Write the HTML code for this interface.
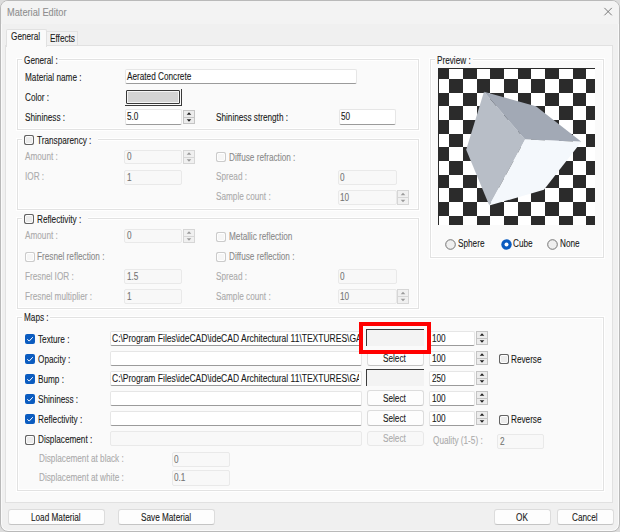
<!DOCTYPE html>
<html><head><meta charset="utf-8"><style>
html,body{margin:0;padding:0;width:620px;height:532px;overflow:hidden;background:#dcdcdc;}
body{position:relative;font-family:"Liberation Sans",sans-serif;}
.r{position:absolute;box-sizing:border-box;}
.t{position:absolute;white-space:nowrap;line-height:11px;transform-origin:0 0;-webkit-text-stroke:0.1px currentColor;}
.clip{position:absolute;overflow:hidden;}
</style></head><body>
<div class="r" style="left:0px;top:0px;width:620px;height:532px;background:#f0f0f0;border:1px solid #b9b9b9;border-radius:8px;box-shadow:inset 0 0 0 1px #fafafa;"></div>
<div class="r" style="left:1px;top:1px;width:618px;height:23px;background:#f3f3f3;border-radius:7px 7px 0 0;"></div>
<div class="t" style="left:7.3px;top:6.87px;color:#8f8f8f;font-size:10.5px;transform:scaleX(0.88);">Material Editor</div>
<svg class="r" style="left:603px;top:6px" width="10" height="11"><path d="M1.4,1.9 L8.8,9.3 M8.8,1.9 L1.4,9.3" stroke="#6a6a6a" stroke-width="0.9"/></svg>
<div class="r" style="left:46px;top:31px;width:32px;height:15px;background:#f2f2f2;border:1px solid #e2e2e2;border-bottom:none;"></div>
<div class="t" style="left:49.8px;top:32.90px;color:#1a1a1a;font-size:10.0px;transform:scaleX(0.82);">Effects</div>
<div class="r" style="left:5px;top:45px;width:608px;height:458px;background:#fafafa;border:1px solid #e1e1e1;"></div>
<div class="r" style="left:6px;top:29px;width:41px;height:18px;background:#fafafa;border:1px solid #e1e1e1;border-bottom:none;border-radius:2px 2px 0 0;"></div>
<div class="t" style="left:11.1px;top:31.30px;color:#1a1a1a;font-size:10.0px;transform:scaleX(0.82);">General</div>
<div class="r" style="left:17px;top:59px;width:402px;height:71px;border:1px solid #e2e2e2;box-shadow:inset 0 0 0 1px #fff, 0 0 0 1px #fff;"></div>
<div class="r" style="left:17px;top:139px;width:402px;height:71px;border:1px solid #e2e2e2;box-shadow:inset 0 0 0 1px #fff, 0 0 0 1px #fff;"></div>
<div class="r" style="left:17px;top:218px;width:402px;height:91px;border:1px solid #e2e2e2;box-shadow:inset 0 0 0 1px #fff, 0 0 0 1px #fff;"></div>
<div class="r" style="left:17px;top:317px;width:587px;height:174px;border:1px solid #e2e2e2;box-shadow:inset 0 0 0 1px #fff, 0 0 0 1px #fff;"></div>
<div class="r" style="left:430px;top:59px;width:174px;height:199px;border:1px solid #e2e2e2;box-shadow:inset 0 0 0 1px #fff, 0 0 0 1px #fff;"></div>
<div class="r" style="left:22px;top:55px;width:37px;height:11px;background:#fafafa;"></div>
<div class="r" style="left:22px;top:133px;width:76px;height:14px;background:#fafafa;"></div>
<div class="r" style="left:22px;top:212px;width:66px;height:14px;background:#fafafa;"></div>
<div class="r" style="left:22px;top:312px;width:28px;height:11px;background:#fafafa;"></div>
<div class="r" style="left:435px;top:55px;width:38px;height:11px;background:#fafafa;"></div>
<div class="t" style="left:24px;top:55.00px;color:#1a1a1a;font-size:10.0px;transform:scaleX(0.82);">General :</div>
<div class="t" style="left:437.3px;top:55.00px;color:#1a1a1a;font-size:10.0px;transform:scaleX(0.82);">Preview :</div>
<div class="t" style="left:24px;top:312.40px;color:#1a1a1a;font-size:10.0px;transform:scaleX(0.82);">Maps :</div>
<div class="t" style="left:25px;top:72.00px;color:#1a1a1a;font-size:10.0px;transform:scaleX(0.82);">Material name :</div>
<div class="r" style="left:125px;top:69px;width:232px;height:15px;background:#ffffff;border:1px solid #e6e6e6;border-bottom:1px solid #9b9b9b;border-radius:2px;"></div>
<div class="t" style="left:126.8px;top:70.50px;color:#1a1a1a;font-size:10.0px;transform:scaleX(0.82);">Aerated Concrete</div>
<div class="t" style="left:25px;top:92.10px;color:#1a1a1a;font-size:10.0px;transform:scaleX(0.82);">Color :</div>
<div class="r" style="left:181px;top:89px;width:1px;height:17px;background:#3a3a3a;"></div>
<div class="r" style="left:125px;top:105px;width:57px;height:1px;background:#3a3a3a;"></div>
<div class="r" style="left:126px;top:90px;width:54px;height:14px;background:#d3d3d3;border:1px solid #383838;border-radius:1px;box-shadow:inset 0 0 0 1px #f4f4f4;"></div>
<div class="t" style="left:25px;top:112.00px;color:#1a1a1a;font-size:10.0px;transform:scaleX(0.82);">Shininess :</div>
<div class="r" style="left:125px;top:109px;width:57px;height:16px;background:#ffffff;border:1px solid #e6e6e6;border-bottom:1px solid #9b9b9b;border-radius:2px;"></div>
<div class="t" style="left:127.2px;top:111.00px;color:#1a1a1a;font-size:10.0px;transform:scaleX(0.82);">5.0</div>
<div class="r" style="left:183px;top:110px;width:12px;height:14px;background:#ececec;border:1px solid #c4c4c4;"></div>
<div class="r" style="left:183px;top:116.5px;width:12px;height:1.0px;background:#c4c4c4;"></div>
<svg class="r" style="left:183px;top:110px" width="12" height="14"><path d="M3.7,4.8 L8.3,4.8 L6.0,2.2 Z M3.7,9.2 L8.3,9.2 L6.0,11.8 Z" fill="#222"/></svg>
<div class="t" style="left:215.6px;top:112.00px;color:#1a1a1a;font-size:10.0px;transform:scaleX(0.82);">Shininess strength :</div>
<div class="r" style="left:339px;top:109px;width:57px;height:16px;background:#ffffff;border:1px solid #e6e6e6;border-bottom:1px solid #9b9b9b;border-radius:2px;"></div>
<div class="t" style="left:341px;top:111.00px;color:#1a1a1a;font-size:10.0px;transform:scaleX(0.82);">50</div>
<svg class="r" style="left:24px;top:135px" width="10" height="10"><rect x="0.5" y="0.5" width="9" height="9" rx="2" fill="#ffffff" stroke="#636363" stroke-width="1.1"/><rect x="2" y="2" width="6" height="6" fill="#ececec"/></svg>
<div class="t" style="left:37.1px;top:134.60px;color:#1a1a1a;font-size:10.0px;transform:scaleX(0.82);">Transparency :</div>
<div class="t" style="left:25px;top:151.10px;color:#ababab;font-size:10.0px;transform:scaleX(0.82);">Amount :</div>
<div class="r" style="left:124px;top:150px;width:58px;height:14px;background:#f8f8f8;border:1px solid #e9e9e9;border-radius:2px;"></div>
<div class="t" style="left:127px;top:151.00px;color:#747474;font-size:10.0px;transform:scaleX(0.82);">0</div>
<div class="r" style="left:183px;top:150px;width:12px;height:14px;background:#f0f0f0;border:1px solid #d6d6d6;"></div>
<div class="r" style="left:183px;top:156.5px;width:12px;height:1.0px;background:#d6d6d6;"></div>
<svg class="r" style="left:183px;top:150px" width="12" height="14"><path d="M3.7,4.8 L8.3,4.8 L6.0,2.2 Z M3.7,9.2 L8.3,9.2 L6.0,11.8 Z" fill="#9a9a9a"/></svg>
<div class="t" style="left:25px;top:171.10px;color:#ababab;font-size:10.0px;transform:scaleX(0.82);">IOR :</div>
<div class="r" style="left:124px;top:170px;width:58px;height:15px;background:#f8f8f8;border:1px solid #e9e9e9;border-radius:2px;"></div>
<div class="t" style="left:127px;top:171.50px;color:#747474;font-size:10.0px;transform:scaleX(0.82);">1</div>
<svg class="r" style="left:216px;top:152px" width="10" height="10"><rect x="0.5" y="0.5" width="9" height="9" rx="2" fill="#ffffff" stroke="#cbcbcb" stroke-width="1.1"/><rect x="2" y="2" width="6" height="6" fill="#f6f6f6"/></svg>
<div class="t" style="left:229px;top:151.70px;color:#8a8a8a;font-size:10.0px;transform:scaleX(0.82);">Diffuse refraction :</div>
<div class="t" style="left:216px;top:171.10px;color:#ababab;font-size:10.0px;transform:scaleX(0.82);">Spread :</div>
<div class="r" style="left:338px;top:170px;width:59px;height:15px;background:#f8f8f8;border:1px solid #e9e9e9;border-radius:2px;"></div>
<div class="t" style="left:340.4px;top:171.50px;color:#747474;font-size:10.0px;transform:scaleX(0.82);">0</div>
<div class="t" style="left:216px;top:191.20px;color:#ababab;font-size:10.0px;transform:scaleX(0.82);">Sample count :</div>
<div class="r" style="left:338px;top:190px;width:59px;height:15px;background:#f8f8f8;border:1px solid #e9e9e9;border-radius:2px;"></div>
<div class="t" style="left:340.4px;top:191.50px;color:#747474;font-size:10.0px;transform:scaleX(0.82);">10</div>
<div class="r" style="left:397px;top:190px;width:12px;height:15px;background:#f0f0f0;border:1px solid #d6d6d6;"></div>
<div class="r" style="left:397px;top:197.0px;width:12px;height:1.0px;background:#d6d6d6;"></div>
<svg class="r" style="left:397px;top:190px" width="12" height="15"><path d="M3.7,5.3 L8.3,5.3 L6.0,2.7 Z M3.7,9.7 L8.3,9.7 L6.0,12.3 Z" fill="#9a9a9a"/></svg>
<svg class="r" style="left:24px;top:214px" width="10" height="10"><rect x="0.5" y="0.5" width="9" height="9" rx="2" fill="#ffffff" stroke="#636363" stroke-width="1.1"/><rect x="2" y="2" width="6" height="6" fill="#ececec"/></svg>
<div class="t" style="left:37.1px;top:213.60px;color:#1a1a1a;font-size:10.0px;transform:scaleX(0.82);">Reflectivity :</div>
<div class="t" style="left:25px;top:230.10px;color:#ababab;font-size:10.0px;transform:scaleX(0.82);">Amount :</div>
<div class="r" style="left:124px;top:229px;width:58px;height:14px;background:#f8f8f8;border:1px solid #e9e9e9;border-radius:2px;"></div>
<div class="t" style="left:127px;top:230.00px;color:#747474;font-size:10.0px;transform:scaleX(0.82);">0</div>
<div class="r" style="left:183px;top:229px;width:12px;height:14px;background:#f0f0f0;border:1px solid #d6d6d6;"></div>
<div class="r" style="left:183px;top:235.5px;width:12px;height:1.0px;background:#d6d6d6;"></div>
<svg class="r" style="left:183px;top:229px" width="12" height="14"><path d="M3.7,4.8 L8.3,4.8 L6.0,2.2 Z M3.7,9.2 L8.3,9.2 L6.0,11.8 Z" fill="#9a9a9a"/></svg>
<svg class="r" style="left:25px;top:252px" width="10" height="10"><rect x="0.5" y="0.5" width="9" height="9" rx="2" fill="#ffffff" stroke="#cbcbcb" stroke-width="1.1"/><rect x="2" y="2" width="6" height="6" fill="#f6f6f6"/></svg>
<div class="t" style="left:37.3px;top:250.90px;color:#8a8a8a;font-size:10.0px;transform:scaleX(0.82);">Fresnel reflection :</div>
<div class="t" style="left:25px;top:270.60px;color:#ababab;font-size:10.0px;transform:scaleX(0.82);">Fresnel IOR :</div>
<div class="r" style="left:124px;top:269px;width:58px;height:15px;background:#f8f8f8;border:1px solid #e9e9e9;border-radius:2px;"></div>
<div class="t" style="left:127px;top:270.50px;color:#747474;font-size:10.0px;transform:scaleX(0.82);">1.5</div>
<div class="t" style="left:25px;top:290.60px;color:#ababab;font-size:10.0px;transform:scaleX(0.82);">Fresnel multiplier :</div>
<div class="r" style="left:124px;top:289px;width:58px;height:15px;background:#f8f8f8;border:1px solid #e9e9e9;border-radius:2px;"></div>
<div class="t" style="left:127px;top:290.50px;color:#747474;font-size:10.0px;transform:scaleX(0.82);">1</div>
<svg class="r" style="left:216px;top:231.5px" width="10" height="10"><rect x="0.5" y="0.5" width="9" height="9" rx="2" fill="#ffffff" stroke="#cbcbcb" stroke-width="1.1"/><rect x="2" y="2" width="6" height="6" fill="#f6f6f6"/></svg>
<div class="t" style="left:229px;top:230.90px;color:#8a8a8a;font-size:10.0px;transform:scaleX(0.82);">Metallic reflection</div>
<svg class="r" style="left:216px;top:252px" width="10" height="10"><rect x="0.5" y="0.5" width="9" height="9" rx="2" fill="#ffffff" stroke="#cbcbcb" stroke-width="1.1"/><rect x="2" y="2" width="6" height="6" fill="#f6f6f6"/></svg>
<div class="t" style="left:229px;top:251.10px;color:#8a8a8a;font-size:10.0px;transform:scaleX(0.82);">Diffuse reflection :</div>
<div class="t" style="left:216px;top:270.60px;color:#ababab;font-size:10.0px;transform:scaleX(0.82);">Spread :</div>
<div class="r" style="left:338px;top:269px;width:59px;height:15px;background:#f8f8f8;border:1px solid #e9e9e9;border-radius:2px;"></div>
<div class="t" style="left:340.4px;top:270.50px;color:#747474;font-size:10.0px;transform:scaleX(0.82);">0</div>
<div class="t" style="left:216px;top:290.60px;color:#ababab;font-size:10.0px;transform:scaleX(0.82);">Sample count :</div>
<div class="r" style="left:338px;top:289px;width:59px;height:15px;background:#f8f8f8;border:1px solid #e9e9e9;border-radius:2px;"></div>
<div class="t" style="left:340.4px;top:290.50px;color:#747474;font-size:10.0px;transform:scaleX(0.82);">10</div>
<div class="r" style="left:397px;top:289px;width:12px;height:15px;background:#f0f0f0;border:1px solid #d6d6d6;"></div>
<div class="r" style="left:397px;top:296.0px;width:12px;height:1.0px;background:#d6d6d6;"></div>
<svg class="r" style="left:397px;top:289px" width="12" height="15"><path d="M3.7,5.3 L8.3,5.3 L6.0,2.7 Z M3.7,9.7 L8.3,9.7 L6.0,12.3 Z" fill="#9a9a9a"/></svg>
<svg class="r" style="left:25px;top:334px" width="10" height="10"><rect x="0" y="0" width="10" height="10" rx="2" fill="#0b5cc0"/><path d="M2.3,5.2 L4.2,7.1 L7.8,3.2" stroke="#fff" stroke-width="1" fill="none"/></svg>
<div class="t" style="left:37.7px;top:333.60px;color:#1a1a1a;font-size:10.0px;transform:scaleX(0.82);">Texture :</div>
<div class="r" style="left:110px;top:331px;width:252px;height:15px;background:#ffffff;border:1px solid #e6e6e6;border-bottom:1px solid #9b9b9b;border-radius:2px;"></div>
<div class="clip" style="left:111px;top:331px;width:248px;height:15px;"><div class="t" style="left:0.7px;top:1.70px;color:#1a1a1a;font-size:10.0px;transform:scaleX(0.85);">C:\Program Files\ideCAD\ideCAD Architectural 11\TEXTURES\GAS-BETON.jpg</div></div>
<div class="r" style="left:366px;top:329px;width:58px;height:17px;background:#f3f3f3;border-top:1px solid #3c3c3c;border-left:1px solid #3c3c3c;"></div>
<div class="r" style="left:429px;top:331px;width:46px;height:15px;background:#ffffff;border:1px solid #e6e6e6;border-bottom:1px solid #9b9b9b;border-radius:2px;"></div>
<div class="t" style="left:432.1px;top:332.50px;color:#1a1a1a;font-size:10.0px;transform:scaleX(0.82);">100</div>
<div class="r" style="left:476px;top:331px;width:12px;height:14px;background:#ececec;border:1px solid #c4c4c4;"></div>
<div class="r" style="left:476px;top:337.5px;width:12px;height:1.0px;background:#c4c4c4;"></div>
<svg class="r" style="left:476px;top:331px" width="12" height="14"><path d="M3.7,4.8 L8.3,4.8 L6.0,2.2 Z M3.7,9.2 L8.3,9.2 L6.0,11.8 Z" fill="#222"/></svg>
<svg class="r" style="left:25px;top:354px" width="10" height="10"><rect x="0" y="0" width="10" height="10" rx="2" fill="#0b5cc0"/><path d="M2.3,5.2 L4.2,7.1 L7.8,3.2" stroke="#fff" stroke-width="1" fill="none"/></svg>
<div class="t" style="left:37.7px;top:353.60px;color:#1a1a1a;font-size:10.0px;transform:scaleX(0.82);">Opacity :</div>
<div class="r" style="left:110px;top:351px;width:252px;height:15px;background:#ffffff;border:1px solid #e6e6e6;border-bottom:1px solid #9b9b9b;border-radius:2px;"></div>
<div class="r" style="left:367px;top:350px;width:57px;height:16px;background:#fdfdfd;border:1px solid #dcdcdc;border-bottom-color:#c4c4c4;border-radius:3px;"></div>
<div class="t" style="left:382.9px;top:352.80px;color:#1a1a1a;font-size:10.0px;transform:scaleX(0.82);">Select</div>
<div class="r" style="left:429px;top:351px;width:46px;height:15px;background:#ffffff;border:1px solid #e6e6e6;border-bottom:1px solid #9b9b9b;border-radius:2px;"></div>
<div class="t" style="left:432.1px;top:352.50px;color:#1a1a1a;font-size:10.0px;transform:scaleX(0.82);">100</div>
<div class="r" style="left:476px;top:351px;width:12px;height:14px;background:#ececec;border:1px solid #c4c4c4;"></div>
<div class="r" style="left:476px;top:357.5px;width:12px;height:1.0px;background:#c4c4c4;"></div>
<svg class="r" style="left:476px;top:351px" width="12" height="14"><path d="M3.7,4.8 L8.3,4.8 L6.0,2.2 Z M3.7,9.2 L8.3,9.2 L6.0,11.8 Z" fill="#222"/></svg>
<svg class="r" style="left:25px;top:374px" width="10" height="10"><rect x="0" y="0" width="10" height="10" rx="2" fill="#0b5cc0"/><path d="M2.3,5.2 L4.2,7.1 L7.8,3.2" stroke="#fff" stroke-width="1" fill="none"/></svg>
<div class="t" style="left:37.7px;top:373.60px;color:#1a1a1a;font-size:10.0px;transform:scaleX(0.82);">Bump :</div>
<div class="r" style="left:110px;top:371px;width:252px;height:15px;background:#ffffff;border:1px solid #e6e6e6;border-bottom:1px solid #9b9b9b;border-radius:2px;"></div>
<div class="clip" style="left:111px;top:371px;width:248px;height:15px;"><div class="t" style="left:0.7px;top:1.70px;color:#1a1a1a;font-size:10.0px;transform:scaleX(0.85);">C:\Program Files\ideCAD\ideCAD Architectural 11\TEXTURES\GAS-BETON.jpg</div></div>
<div class="r" style="left:366px;top:369px;width:58px;height:17px;background:#f3f3f3;border-top:1px solid #3c3c3c;border-left:1px solid #3c3c3c;"></div>
<div class="r" style="left:429px;top:371px;width:46px;height:15px;background:#ffffff;border:1px solid #e6e6e6;border-bottom:1px solid #9b9b9b;border-radius:2px;"></div>
<div class="t" style="left:432.1px;top:372.50px;color:#1a1a1a;font-size:10.0px;transform:scaleX(0.82);">250</div>
<div class="r" style="left:476px;top:371px;width:12px;height:14px;background:#ececec;border:1px solid #c4c4c4;"></div>
<div class="r" style="left:476px;top:377.5px;width:12px;height:1.0px;background:#c4c4c4;"></div>
<svg class="r" style="left:476px;top:371px" width="12" height="14"><path d="M3.7,4.8 L8.3,4.8 L6.0,2.2 Z M3.7,9.2 L8.3,9.2 L6.0,11.8 Z" fill="#222"/></svg>
<svg class="r" style="left:25px;top:394px" width="10" height="10"><rect x="0" y="0" width="10" height="10" rx="2" fill="#0b5cc0"/><path d="M2.3,5.2 L4.2,7.1 L7.8,3.2" stroke="#fff" stroke-width="1" fill="none"/></svg>
<div class="t" style="left:37.7px;top:393.60px;color:#1a1a1a;font-size:10.0px;transform:scaleX(0.82);">Shininess :</div>
<div class="r" style="left:110px;top:391px;width:252px;height:15px;background:#ffffff;border:1px solid #e6e6e6;border-bottom:1px solid #9b9b9b;border-radius:2px;"></div>
<div class="r" style="left:367px;top:390px;width:57px;height:16px;background:#fdfdfd;border:1px solid #dcdcdc;border-bottom-color:#c4c4c4;border-radius:3px;"></div>
<div class="t" style="left:382.9px;top:392.80px;color:#1a1a1a;font-size:10.0px;transform:scaleX(0.82);">Select</div>
<div class="r" style="left:429px;top:391px;width:46px;height:15px;background:#ffffff;border:1px solid #e6e6e6;border-bottom:1px solid #9b9b9b;border-radius:2px;"></div>
<div class="t" style="left:432.1px;top:392.50px;color:#1a1a1a;font-size:10.0px;transform:scaleX(0.82);">100</div>
<div class="r" style="left:476px;top:391px;width:12px;height:14px;background:#ececec;border:1px solid #c4c4c4;"></div>
<div class="r" style="left:476px;top:397.5px;width:12px;height:1.0px;background:#c4c4c4;"></div>
<svg class="r" style="left:476px;top:391px" width="12" height="14"><path d="M3.7,4.8 L8.3,4.8 L6.0,2.2 Z M3.7,9.2 L8.3,9.2 L6.0,11.8 Z" fill="#222"/></svg>
<svg class="r" style="left:25px;top:414px" width="10" height="10"><rect x="0" y="0" width="10" height="10" rx="2" fill="#0b5cc0"/><path d="M2.3,5.2 L4.2,7.1 L7.8,3.2" stroke="#fff" stroke-width="1" fill="none"/></svg>
<div class="t" style="left:37.7px;top:413.60px;color:#1a1a1a;font-size:10.0px;transform:scaleX(0.82);">Reflectivity :</div>
<div class="r" style="left:110px;top:411px;width:252px;height:15px;background:#ffffff;border:1px solid #e6e6e6;border-bottom:1px solid #9b9b9b;border-radius:2px;"></div>
<div class="r" style="left:367px;top:410px;width:57px;height:16px;background:#fdfdfd;border:1px solid #dcdcdc;border-bottom-color:#c4c4c4;border-radius:3px;"></div>
<div class="t" style="left:382.9px;top:412.80px;color:#1a1a1a;font-size:10.0px;transform:scaleX(0.82);">Select</div>
<div class="r" style="left:429px;top:411px;width:46px;height:15px;background:#ffffff;border:1px solid #e6e6e6;border-bottom:1px solid #9b9b9b;border-radius:2px;"></div>
<div class="t" style="left:432.1px;top:412.50px;color:#1a1a1a;font-size:10.0px;transform:scaleX(0.82);">100</div>
<div class="r" style="left:476px;top:411px;width:12px;height:14px;background:#ececec;border:1px solid #c4c4c4;"></div>
<div class="r" style="left:476px;top:417.5px;width:12px;height:1.0px;background:#c4c4c4;"></div>
<svg class="r" style="left:476px;top:411px" width="12" height="14"><path d="M3.7,4.8 L8.3,4.8 L6.0,2.2 Z M3.7,9.2 L8.3,9.2 L6.0,11.8 Z" fill="#222"/></svg>
<svg class="r" style="left:25px;top:435px" width="10" height="10"><rect x="0.5" y="0.5" width="9" height="9" rx="2" fill="#ffffff" stroke="#636363" stroke-width="1.1"/><rect x="2" y="2" width="6" height="6" fill="#ececec"/></svg>
<div class="t" style="left:37.7px;top:434.20px;color:#1a1a1a;font-size:10.0px;transform:scaleX(0.82);">Displacement :</div>
<div class="r" style="left:110px;top:431px;width:252px;height:15px;background:#f8f8f8;border:1px solid #e9e9e9;border-radius:2px;"></div>
<div class="r" style="left:367px;top:431px;width:57px;height:15px;background:#f8f8f8;border:1px solid #e8e8e8;border-radius:3px;"></div>
<div class="t" style="left:382.9px;top:433.30px;color:#ababab;font-size:10.0px;transform:scaleX(0.82);">Select</div>
<svg class="r" style="left:499px;top:354px" width="10" height="10"><rect x="0.5" y="0.5" width="9" height="9" rx="2" fill="#ffffff" stroke="#636363" stroke-width="1.1"/><rect x="2" y="2" width="6" height="6" fill="#ececec"/></svg>
<div class="t" style="left:511.4px;top:353.80px;color:#1a1a1a;font-size:10.0px;transform:scaleX(0.82);">Reverse</div>
<svg class="r" style="left:499px;top:414.5px" width="10" height="10"><rect x="0.5" y="0.5" width="9" height="9" rx="2" fill="#ffffff" stroke="#636363" stroke-width="1.1"/><rect x="2" y="2" width="6" height="6" fill="#ececec"/></svg>
<div class="t" style="left:511.4px;top:414.30px;color:#1a1a1a;font-size:10.0px;transform:scaleX(0.82);">Reverse</div>
<div class="t" style="left:432.9px;top:435.10px;color:#ababab;font-size:10.0px;transform:scaleX(0.82);">Quality (1-5) :</div>
<div class="r" style="left:497px;top:434px;width:47px;height:15px;background:#f8f8f8;border:1px solid #e9e9e9;border-radius:2px;"></div>
<div class="t" style="left:499.5px;top:435.50px;color:#747474;font-size:10.0px;transform:scaleX(0.82);">2</div>
<div class="t" style="left:38.5px;top:453.40px;color:#ababab;font-size:10.0px;transform:scaleX(0.82);">Displacement at black :</div>
<div class="r" style="left:172px;top:452px;width:58px;height:15px;background:#f8f8f8;border:1px solid #e9e9e9;border-radius:2px;"></div>
<div class="t" style="left:174.3px;top:453.50px;color:#747474;font-size:10.0px;transform:scaleX(0.82);">0</div>
<div class="t" style="left:38.5px;top:471.80px;color:#ababab;font-size:10.0px;transform:scaleX(0.82);">Displacement at white :</div>
<div class="r" style="left:172px;top:470px;width:58px;height:16px;background:#f8f8f8;border:1px solid #e9e9e9;border-radius:2px;"></div>
<div class="t" style="left:174.3px;top:472.00px;color:#747474;font-size:10.0px;transform:scaleX(0.82);">0.1</div>
<div class="r" style="left:359px;top:322px;width:72px;height:32px;border:4px solid #ff0000;"></div>
<svg class="r" style="left:438px;top:68px" width="157" height="157"><rect width="157" height="157" fill="#fff"/><g fill="#2b2b2b" shape-rendering="crispEdges"><rect x="0.00" y="0.00" width="11.20" height="11.00"/><rect x="24.90" y="0.00" width="13.70" height="11.00"/><rect x="52.30" y="0.00" width="13.70" height="11.00"/><rect x="79.70" y="0.00" width="13.70" height="11.00"/><rect x="107.10" y="0.00" width="13.70" height="11.00"/><rect x="134.50" y="0.00" width="13.70" height="11.00"/><rect x="11.20" y="11.00" width="13.70" height="13.65"/><rect x="38.60" y="11.00" width="13.70" height="13.65"/><rect x="66.00" y="11.00" width="13.70" height="13.65"/><rect x="93.40" y="11.00" width="13.70" height="13.65"/><rect x="120.80" y="11.00" width="13.70" height="13.65"/><rect x="148.20" y="11.00" width="8.80" height="13.65"/><rect x="0.00" y="24.65" width="11.20" height="13.65"/><rect x="24.90" y="24.65" width="13.70" height="13.65"/><rect x="52.30" y="24.65" width="13.70" height="13.65"/><rect x="79.70" y="24.65" width="13.70" height="13.65"/><rect x="107.10" y="24.65" width="13.70" height="13.65"/><rect x="134.50" y="24.65" width="13.70" height="13.65"/><rect x="11.20" y="38.30" width="13.70" height="13.65"/><rect x="38.60" y="38.30" width="13.70" height="13.65"/><rect x="66.00" y="38.30" width="13.70" height="13.65"/><rect x="93.40" y="38.30" width="13.70" height="13.65"/><rect x="120.80" y="38.30" width="13.70" height="13.65"/><rect x="148.20" y="38.30" width="8.80" height="13.65"/><rect x="0.00" y="51.95" width="11.20" height="13.65"/><rect x="24.90" y="51.95" width="13.70" height="13.65"/><rect x="52.30" y="51.95" width="13.70" height="13.65"/><rect x="79.70" y="51.95" width="13.70" height="13.65"/><rect x="107.10" y="51.95" width="13.70" height="13.65"/><rect x="134.50" y="51.95" width="13.70" height="13.65"/><rect x="11.20" y="65.60" width="13.70" height="13.65"/><rect x="38.60" y="65.60" width="13.70" height="13.65"/><rect x="66.00" y="65.60" width="13.70" height="13.65"/><rect x="93.40" y="65.60" width="13.70" height="13.65"/><rect x="120.80" y="65.60" width="13.70" height="13.65"/><rect x="148.20" y="65.60" width="8.80" height="13.65"/><rect x="0.00" y="79.25" width="11.20" height="13.65"/><rect x="24.90" y="79.25" width="13.70" height="13.65"/><rect x="52.30" y="79.25" width="13.70" height="13.65"/><rect x="79.70" y="79.25" width="13.70" height="13.65"/><rect x="107.10" y="79.25" width="13.70" height="13.65"/><rect x="134.50" y="79.25" width="13.70" height="13.65"/><rect x="11.20" y="92.90" width="13.70" height="13.65"/><rect x="38.60" y="92.90" width="13.70" height="13.65"/><rect x="66.00" y="92.90" width="13.70" height="13.65"/><rect x="93.40" y="92.90" width="13.70" height="13.65"/><rect x="120.80" y="92.90" width="13.70" height="13.65"/><rect x="148.20" y="92.90" width="8.80" height="13.65"/><rect x="0.00" y="106.55" width="11.20" height="13.65"/><rect x="24.90" y="106.55" width="13.70" height="13.65"/><rect x="52.30" y="106.55" width="13.70" height="13.65"/><rect x="79.70" y="106.55" width="13.70" height="13.65"/><rect x="107.10" y="106.55" width="13.70" height="13.65"/><rect x="134.50" y="106.55" width="13.70" height="13.65"/><rect x="11.20" y="120.20" width="13.70" height="13.65"/><rect x="38.60" y="120.20" width="13.70" height="13.65"/><rect x="66.00" y="120.20" width="13.70" height="13.65"/><rect x="93.40" y="120.20" width="13.70" height="13.65"/><rect x="120.80" y="120.20" width="13.70" height="13.65"/><rect x="148.20" y="120.20" width="8.80" height="13.65"/><rect x="0.00" y="133.85" width="11.20" height="13.65"/><rect x="24.90" y="133.85" width="13.70" height="13.65"/><rect x="52.30" y="133.85" width="13.70" height="13.65"/><rect x="79.70" y="133.85" width="13.70" height="13.65"/><rect x="107.10" y="133.85" width="13.70" height="13.65"/><rect x="134.50" y="133.85" width="13.70" height="13.65"/><rect x="11.20" y="147.50" width="13.70" height="9.50"/><rect x="38.60" y="147.50" width="13.70" height="9.50"/><rect x="66.00" y="147.50" width="13.70" height="9.50"/><rect x="93.40" y="147.50" width="13.70" height="9.50"/><rect x="120.80" y="147.50" width="13.70" height="9.50"/><rect x="148.20" y="147.50" width="8.80" height="9.50"/></g><rect x="0" y="0" width="157" height="1" fill="#2b2b2b"/><rect x="0" y="0" width="1" height="157" fill="#2b2b2b"/><polygon points="46.0,23.7 87.1,71.6 51.3,137.6 28.2,81.8" fill="#b8bec7"/><polygon points="46.0,23.7 97.9,38.3 143.4,73.8 87.1,71.6" fill="#a2a9b5"/><polygon points="87.1,71.6 143.4,73.8 105.9,121.7 51.3,137.6" fill="#f4f8fc"/></svg>
<svg class="r" style="left:445px;top:238.5px" width="11" height="11"><circle cx="5.5" cy="5.5" r="4.8" fill="#efefef" stroke="#666" stroke-width="0.9"/></svg>
<div class="t" style="left:458px;top:238.40px;color:#1a1a1a;font-size:10.0px;transform:scaleX(0.82);">Sphere</div>
<svg class="r" style="left:501px;top:238.5px" width="11" height="11"><circle cx="5.5" cy="5.5" r="5.2" fill="#0b5cc0"/><circle cx="5.5" cy="5.5" r="2" fill="#fff"/></svg>
<div class="t" style="left:513.2px;top:238.40px;color:#1a1a1a;font-size:10.0px;transform:scaleX(0.82);">Cube</div>
<svg class="r" style="left:547.3px;top:238.5px" width="11" height="11"><circle cx="5.5" cy="5.5" r="4.8" fill="#efefef" stroke="#666" stroke-width="0.9"/></svg>
<div class="t" style="left:560.3px;top:238.40px;color:#1a1a1a;font-size:10.0px;transform:scaleX(0.82);">None</div>
<div class="r" style="left:8px;top:509px;width:97px;height:16px;background:#fdfdfd;border:1px solid #dcdcdc;border-bottom-color:#c4c4c4;border-radius:3px;"></div>
<div class="t" style="left:31px;top:511.80px;color:#1a1a1a;font-size:10.0px;transform:scaleX(0.82);">Load Material</div>
<div class="r" style="left:118px;top:509px;width:97px;height:16px;background:#fdfdfd;border:1px solid #dcdcdc;border-bottom-color:#c4c4c4;border-radius:3px;"></div>
<div class="t" style="left:141.3px;top:511.80px;color:#1a1a1a;font-size:10.0px;transform:scaleX(0.82);">Save Material</div>
<div class="r" style="left:494px;top:509px;width:57px;height:16px;background:#fdfdfd;border:1px solid #dcdcdc;border-bottom-color:#c4c4c4;border-radius:3px;"></div>
<div class="t" style="left:516.3px;top:511.80px;color:#1a1a1a;font-size:10.0px;transform:scaleX(0.82);">OK</div>
<div class="r" style="left:557px;top:509px;width:57px;height:16px;background:#fdfdfd;border:1px solid #dcdcdc;border-bottom-color:#c4c4c4;border-radius:3px;"></div>
<div class="t" style="left:572.3px;top:511.80px;color:#1a1a1a;font-size:10.0px;transform:scaleX(0.82);">Cancel</div>
</body></html>
